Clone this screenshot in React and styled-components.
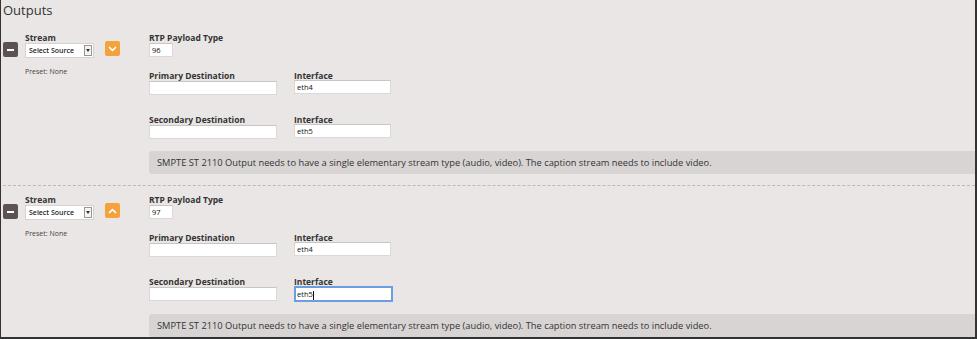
import React from 'react';
import styled, { createGlobalStyle } from 'styled-components';

const GlobalStyle = createGlobalStyle`
  html, body {
    margin: 0;
    padding: 0;
    background: #eae6e5;
  }
  body {
    font-family: "Open Sans", "Liberation Sans", sans-serif;
    color: #333;
  }
`

const Page = styled.div`
  box-sizing: border-box;
  width: 977px;
  height: 339px;
  overflow: hidden;
  background: #eae6e5;
  border-left: 1px solid #333;
  border-right: 2px solid #333;
  border-bottom: 2px solid #333;
  padding-left: 2px;
`

const Title = styled.h2`
  margin: 0;
  height: 24px;
  font-size: 13px;
  font-weight: 400;
  line-height: 20px;
  color: #333;
`

const Section = styled.div`
  display: flex;
  align-items: flex-start;
  padding: 8px 0 11px;
  border-bottom: 1px dashed #bdb9b8;
`

const Left = styled.div`
  display: flex;
  align-items: flex-start;
  width: 146px;
  flex-shrink: 0;
`

const IconButton = styled.button`
  box-sizing: border-box;
  width: 15px;
  height: 15px;
  margin-top: ${p => p.$top}px;
  padding: 0;
  border: none;
  border-radius: 2px;
  background: ${p => p.$bg};
  display: flex;
  align-items: center;
  justify-content: center;
`

const Dash = styled.span`
  width: 7px;
  height: 2px;
  background: #fff;
`

const StreamCol = styled.div`
  display: flex;
  flex-direction: column;
  width: 69px;
  margin: 0 11px 0 7px;
`

const Label = styled.label`
  display: block;
  height: 11px;
  font-size: 8.5px;
  font-weight: 700;
  line-height: 11px;
  color: #333;
  white-space: nowrap;
`

const Select = styled.div`
  box-sizing: border-box;
  display: flex;
  align-items: center;
  height: 15px;
  background: #fff;
  border: 1px solid #d6d2d1;
  font-size: 7px;
  font-weight: 600;
  color: #222;
  padding-left: 3px;
`

const SelectText = styled.span`
  flex: 1;
`

const SelectArrow = styled.span`
  box-sizing: border-box;
  width: 8px;
  height: 11px;
  margin-right: 1px;
  border: 1px solid #9a9696;
  background: #f4f4f4;
  display: flex;
  align-items: center;
  justify-content: center;

  &::after {
    content: "";
    border-left: 2px solid transparent;
    border-right: 2px solid transparent;
    border-top: 3px solid #333;
  }
`

const Preset = styled.div`
  margin-top: 9px;
  font-size: 7px;
  color: #444;
`

const Fields = styled.div`
  flex: 1;
  display: flex;
  flex-direction: column;
`

const Row = styled.div`
  display: flex;
  gap: 17px;
  margin-top: ${p => p.$top || 0}px;
`

const Field = styled.div`
  display: flex;
  flex-direction: column;
`

const Input = styled.div`
  box-sizing: border-box;
  width: ${p => p.$w}px;
  height: ${p => p.$focused ? 16 : 14}px;
  margin-top: ${p => p.$shift || 0}px;
  background: #fff;
  border: ${p => p.$focused ? '2px solid #6a9ee0' : '1px solid #dcd8d7'};
  border-top-color: ${p => p.$focused ? '#6a9ee0' : '#c9c5c4'};
  padding-left: ${p => p.$focused ? 1 : 2}px;
  font-size: 7.5px;
  line-height: 12px;
  color: #111;
`

const Caret = styled.span`
  display: inline-block;
  width: 1px;
  height: 9px;
  background: #111;
  vertical-align: middle;
`

const Message = styled.div`
  box-sizing: border-box;
  margin-top: 12px;
  height: 23px;
  padding: 0 8px;
  background: #d8d4d3;
  border-radius: 3px 0 0 3px;
  font-size: 9.3px;
  line-height: 23px;
  color: #333;
  white-space: nowrap;
`

const outputs = [
  { id: 1, payload: '96', expanded: true },
  { id: 2, payload: '97', expanded: false, focusLast: true },
]

function Chevron({ up }) {
  return (
    <svg width="9" height="6" viewBox="0 0 9 6">
      <path
        d={up ? 'M1.5 4.5 L4.5 1.5 L7.5 4.5' : 'M1.5 1.5 L4.5 4.5 L7.5 1.5'}
        fill="none"
        stroke="#fff"
        strokeWidth="1.7"
        strokeLinecap="round"
        strokeLinejoin="round"
      />
    </svg>
  )
}

function OutputRow({ item }) {
  return (
    <Section>
      <Left>
        <IconButton $bg="#5d5252" $top={10}><Dash /></IconButton>
        <StreamCol>
          <Label>Stream</Label>
          <Select>
            <SelectText>Select Source</SelectText>
            <SelectArrow />
          </Select>
          <Preset>Preset: None</Preset>
        </StreamCol>
        <IconButton $bg="#f4a23c" $top={9}>
          <Chevron up={!item.expanded} />
        </IconButton>
      </Left>
      <Fields>
        <Field>
          <Label>RTP Payload Type</Label>
          <Input $w={24}>{item.payload}</Input>
        </Field>
        <Row $top={13}>
          <Field>
            <Label>Primary Destination</Label>
            <Input $w={128} />
          </Field>
          <Field>
            <Label>Interface</Label>
            <Input $w={97} $shift={-1}>eth4</Input>
          </Field>
        </Row>
        <Row $top={19}>
          <Field>
            <Label>Secondary Destination</Label>
            <Input $w={128} />
          </Field>
          <Field>
            <Label>Interface</Label>
            {item.focusLast ? (
              <Input $w={99} $shift={-1} $focused>eth5<Caret /></Input>
            ) : (
              <Input $w={97} $shift={-1}>eth5</Input>
            )}
          </Field>
        </Row>
        <Message>
          SMPTE ST 2110 Output needs to have a single elementary stream type (audio, video). The caption stream needs to include video.
        </Message>
      </Fields>
    </Section>
  )
}

export default function App() {
  return (
    <>
      <GlobalStyle />
      <Page>
        <Title>Outputs</Title>
        {outputs.map(item => <OutputRow key={item.id} item={item} />)}
      </Page>
    </>
  )
}
